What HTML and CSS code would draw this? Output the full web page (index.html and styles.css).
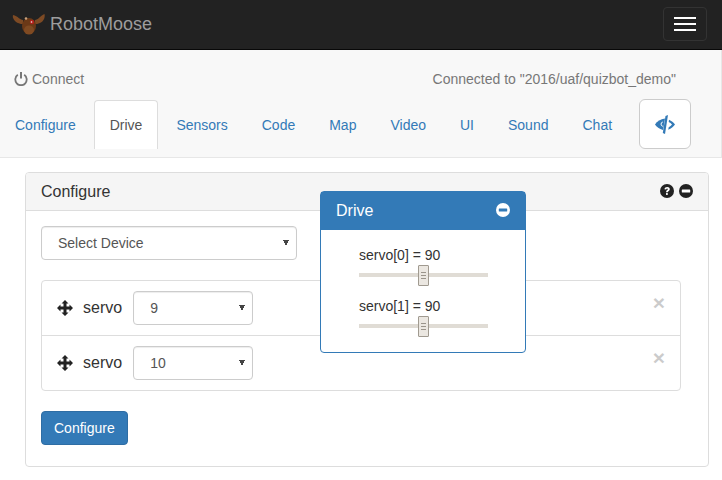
FILE: index.html
```html
<!DOCTYPE html>
<html lang="en">

<head>
    <meta charset="UTF-8">
    <title>RobotMoose</title>
    <link rel="stylesheet" href="styles.css">
</head>

<body>
    <header class="navbar">
        <a class="brand" href="#">
            <svg class="moose" viewBox="0 0 33 24" width="33" height="24">
                <path d="M11 8C8 8 6 4 1 3 0 6 3 10 6 11c2 1 4 1 5 1z" fill="#7d4a24" />
                <path d="M23 8c3 0 5-4 9.500-6C33.500 6 31 10 28 11c-2 1-4 1-5 1z" fill="#7d4a24" />
                <ellipse cx="17" cy="14" rx="7" ry="8" fill="#6b3917" />
                <ellipse cx="17" cy="18" rx="5" ry="4.500" fill="#7f4a22" />
                <circle cx="20" cy="10" r="2.200" fill="#b3201c" />
                <circle cx="19.500" cy="10" r=".8" fill="#eee" />
                <circle cx="14" cy="6.500" r="1.300" fill="#c9a27c" />
            </svg>
            RobotMoose
        </a>
        <button class="toggle">
            <span class="bar"></span>
            <span class="bar"></span>
            <span class="bar"></span>
        </button>
    </header>

    <section class="subnav">
        <div class="status-row">
            <a class="connect" href="#">
                <svg viewBox="0 0 14 14" width="14" height="14">
                    <path d="M3.800 2.800a5.700 5.700 0 1 0 6.400 0" fill="none" stroke="#777" stroke-width="1.800" />
                    <path d="M7 0v6.500" fill="none" stroke="#777" stroke-width="2" />
                </svg>
                Connect
            </a>
            <span class="status">Connected to "2016/uaf/quizbot_demo"</span>
        </div>
        <ul class="tabs">
            <li><a href="#">Configure</a></li>
            <li class="active"><a href="#">Drive</a></li>
            <li><a href="#">Sensors</a></li>
            <li><a href="#">Code</a></li>
            <li><a href="#">Map</a></li>
            <li><a href="#">Video</a></li>
            <li><a href="#">UI</a></li>
            <li><a href="#">Sound</a></li>
            <li><a href="#">Chat</a></li>
            <li class="eye-item">
                <button class="eye-btn">
                    <svg viewBox="0 0 20 19" width="20" height="19">
                        <path d="M10 3.500C5.500 4 2 6.500 0 9.500c1.600 2.500 4.300 4.500 8 5.500z" fill="#337ab7" />
                        <path d="M7.800 11.300A2.200 2.200 0 0 1 7.800 7" fill="none" stroke="#fff" stroke-width="1" />
                        <path d="M10.500 1 13 0l-3 19-2.200-1z" fill="#337ab7" />
                        <path d="M14 4.800c2.500 1 4.500 2.800 6 4.700-1.500 2.200-3.800 4-6.800 5.200l.5-2.500c1.400-.7 2.500-1.600 3.300-2.700-.9-1-2-1.800-3.300-2.400z" fill="#337ab7" />
                    </svg>
                </button>
            </li>
        </ul>
    </section>

    <main class="panel">
        <div class="panel-heading">
            <span class="panel-title">Configure</span>
            <span class="panel-icons">
                <svg viewBox="0 0 14 14" width="14" height="14">
                    <circle cx="7" cy="7" r="7" fill="#222" />
                    <path d="M4.400 5.300C4.700 3.700 5.800 3 7.200 3c1.500 0 2.600.9 2.600 2.200 0 1.900-2 1.800-2 3.100H6c0-2.200 1.800-2.200 1.800-3.100 0-.4-.3-.6-.7-.6-.5 0-.8.300-.9.800z" fill="#fff" />
                    <rect x="6" y="9.100" width="1.800" height="1.800" fill="#fff" />
                </svg>
                <svg viewBox="0 0 14 14" width="14" height="14">
                    <circle cx="7" cy="7" r="7" fill="#222" />
                    <rect x="2.800" y="5.500" width="8.400" height="3" rx=".5" fill="#fff" />
                </svg>
            </span>
        </div>
        <div class="panel-body">
            <select class="field device">
                <option>Select Device</option>
            </select>
            <ul class="list">
                <li class="list-item">
                    <svg class="move" viewBox="0 0 16 16" width="16" height="16">
                        <path d="M8 0l3.500 3.500h-2v3h3v-2L16 8l-3.500 3.500v-2h-3v3h2L8 16l-3.500-3.500h2v-3h-3v2L0 8l3.500-3.500v2h3v-3h-2z" fill="#222" />
                    </svg>
                    <span class="item-name">servo</span>
                    <select class="field pin">
                        <option>9</option>
                    </select>
                    <span class="remove">×</span>
                </li>
                <li class="list-item">
                    <svg class="move" viewBox="0 0 16 16" width="16" height="16">
                        <path d="M8 0l3.500 3.500h-2v3h3v-2L16 8l-3.500 3.500v-2h-3v3h2L8 16l-3.500-3.500h2v-3h-3v2L0 8l3.500-3.500v2h3v-3h-2z" fill="#222" />
                    </svg>
                    <span class="item-name">servo</span>
                    <select class="field pin">
                        <option>10</option>
                    </select>
                    <span class="remove">×</span>
                </li>
            </ul>
            <button class="btn-primary">Configure</button>
        </div>
    </main>

    <div class="drive-popup">
        <div class="popup-heading">
            <span>Drive</span>
            <svg class="popup-toggle" viewBox="0 0 14 14" width="14" height="14">
                <circle cx="7" cy="7" r="7" fill="#fff" />
                <rect x="2.800" y="5.500" width="8.400" height="3" rx=".5" fill="#337ab7" />
            </svg>
        </div>
        <div class="popup-body">
            <div class="servo">
                <div class="servo-label">servo[0] = 90</div>
                <div class="track"><span class="handle"></span></div>
            </div>
            <div class="servo">
                <div class="servo-label">servo[1] = 90</div>
                <div class="track"><span class="handle"></span></div>
            </div>
        </div>
    </div>
</body>

</html>
```

FILE: styles.css
```css
* {
    box-sizing: border-box;
}

body {
    margin: 0;
    font-family: "Liberation Sans", Arial, sans-serif;
    font-size: 14px;
    line-height: 20px;
    color: #333;
    background-color: #fff;
}

a {
    text-decoration: none;
}

ul {
    list-style: none;
    margin: 0;
    padding: 0;
}

.navbar {
    display: flex;
    justify-content: space-between;
    align-items: center;
    height: 50px;
    padding: 0 15px 2px 12px;
    background-color: #222;
    border-bottom: 1px solid #080808;
}

.brand {
    display: flex;
    align-items: center;
    gap: 5px;
    font-size: 18px;
    color: #9d9d9d;
}

.toggle {
    display: flex;
    flex-direction: column;
    justify-content: center;
    gap: 4px;
    width: 44px;
    height: 34px;
    padding: 0 10px;
    background: transparent;
    border: 1px solid #333;
    border-radius: 4px;
}

.bar {
    display: block;
    width: 22px;
    height: 2px;
    background-color: #fff;
}

.subnav {
    height: 108px;
    background-color: #f8f8f8;
    border-bottom: 1px solid #e7e7e7;
    border-right: 1px solid #e7e7e7;
}

.status-row {
    display: flex;
    justify-content: space-between;
    align-items: center;
    height: 50px;
    padding: 8px 45px 1px 14px;
    color: #777;
}

.connect {
    display: flex;
    align-items: center;
    gap: 4px;
    color: #777;
}

.tabs {
    display: flex;
}

.tabs li {
    margin-right: 2px;
}

.tabs a {
    display: block;
    height: 49px;
    padding: 14px 15px;
    color: #337ab7;
    border: 1px solid transparent;
    border-bottom: 0;
}

.tabs li:first-child a {
    padding-left: 14px;
}

.tabs .active a {
    color: #555;
    background-color: #fff;
    border-color: #ddd;
    border-radius: 4px 4px 0 0;
}

.eye-item {
    margin-left: 9px;
}

.eye-btn {
    display: flex;
    justify-content: center;
    align-items: center;
    width: 52px;
    height: 50px;
    padding: 0;
    margin-top: -1px;
    background-color: #fff;
    border: 1px solid #ccc;
    border-radius: 6px;
}

.panel {
    margin: 14px 13px 0 25px;
    height: 295px;
    border: 1px solid #ddd;
    border-radius: 4px;
}

.panel-heading {
    display: flex;
    justify-content: space-between;
    align-items: center;
    height: 38px;
    padding: 0 15px;
    background-color: #f5f5f5;
    border-bottom: 1px solid #ddd;
    border-radius: 3px 3px 0 0;
}

.panel-title {
    font-size: 16px;
}

.panel-icons {
    display: flex;
    gap: 5px;
    margin-bottom: 2px;
}

.panel-body {
    padding: 15px;
}

.field {
    appearance: none;
    height: 34px;
    padding: 6px 16px;
    font-family: inherit;
    font-size: 14px;
    color: #555;
    background-color: #fff;
    background-image: linear-gradient(to top right, transparent 50%, #444 50%), linear-gradient(to top left, transparent 50%, #444 50%);
    background-size: 3px 6px;
    background-position: right 10px center, right 7px center;
    background-repeat: no-repeat;
    border: 1px solid #ccc;
    border-radius: 4px;
    box-shadow: inset 0 1px 1px rgba(0, 0, 0, .075);
}

.device {
    display: block;
    width: 256px;
}

.list {
    width: 640px;
    margin: 20px 0;
    border: 1px solid #ddd;
    border-radius: 4px;
}

.list-item {
    display: flex;
    align-items: center;
    height: 55px;
    padding: 0 15px;
    border-top: 1px solid #ddd;
}

.list-item:first-child {
    border-top: 0;
    height: 54px;
}

.item-name {
    margin-left: 10px;
    font-size: 16px;
}

.pin {
    width: 120px;
    margin-left: 11px;
}

.remove {
    margin-left: auto;
    margin-top: -10px;
    font-size: 21px;
    font-weight: bold;
    color: #000;
    opacity: .2;
}

.btn-primary {
    height: 34px;
    padding: 6px 12px;
    font-family: inherit;
    font-size: 14px;
    color: #fff;
    background-color: #337ab7;
    border: 1px solid #2e6da4;
    border-radius: 4px;
}

.drive-popup {
    position: absolute;
    left: 320px;
    top: 191px;
    width: 206px;
    height: 162px;
    background-color: #fff;
    border: 1px solid #337ab7;
    border-radius: 4px;
}

.popup-heading {
    display: flex;
    justify-content: space-between;
    align-items: center;
    height: 38px;
    padding: 0 15px;
    font-size: 16px;
    color: #fff;
    background-color: #337ab7;
}

.popup-toggle {
    margin-bottom: 2px;
}

.popup-body {
    padding: 15px 37px 0 38px;
}

.servo {
    height: 51px;
}

.servo-label {
    height: 20px;
}

.track {
    position: relative;
    height: 4px;
    margin-top: 8px;
    background-color: #e0dcd5;
}

.handle {
    position: absolute;
    left: 59px;
    top: -8px;
    width: 11px;
    height: 21px;
    background-color: #ebe7e1;
    border: 1px solid #a09a90;
    border-radius: 1px;
}

.handle::before {
    content: "";
    position: absolute;
    left: 2px;
    top: 6px;
    width: 5px;
    height: 7px;
    background: repeating-linear-gradient(#9a948b 0 1px, transparent 1px 3px);
}
```
